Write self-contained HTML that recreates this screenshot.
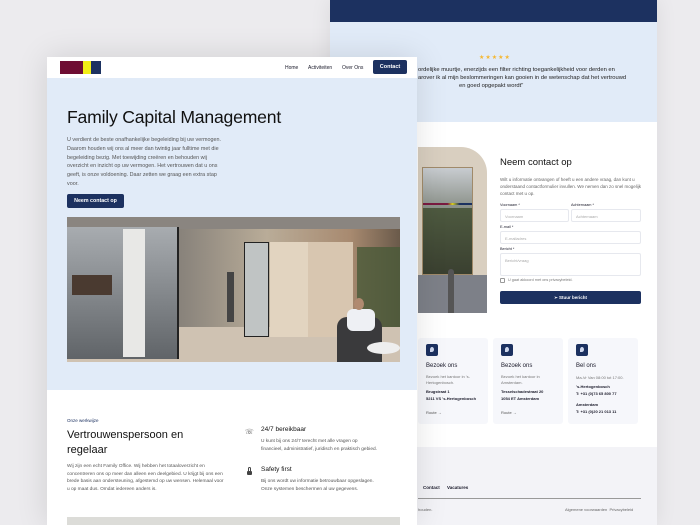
<!DOCTYPE html>
<html><head><meta charset="utf-8"><style>
*{box-sizing:border-box;margin:0;padding:0}
body{width:700px;height:525px;overflow:hidden;background:#ecebee;font-family:"Liberation Sans",sans-serif;position:relative;color:#1a1a2a}
.abs{position:absolute}
.back{left:330px;top:0;width:327px;height:525px;background:#fff;box-shadow:0 0 20px rgba(0,0,0,.08);overflow:hidden}
.front{left:47px;top:57px;width:370px;height:468px;background:#fff;box-shadow:0 0 30px rgba(0,0,0,.12);overflow:hidden}
.t{position:absolute;white-space:nowrap}
.inp{position:absolute;height:13px;border:1px solid #e6e8ee;border-radius:2px;background:#fff;font-size:4px;color:#aaa;padding:4px 4px}
.card{position:absolute;top:338px;width:70px;height:86px;background:#f6f7fb;border-radius:3px}
.ic{position:absolute;left:8px;top:6px;width:12px;height:12px;background:#1c3160;border-radius:2px}
.ic:after{content:"";position:absolute;left:4px;top:3px;width:4px;height:5px;border-radius:50% 50% 50% 0;background:#cfd8ee}
</style></head><body>
<div class="abs back">
  <div class="abs" style="left:0;top:0;width:327px;height:22px;background:#1c3160"></div>
  <div class="abs" style="left:0;top:22px;width:327px;height:100px;background:#e1ebf8"></div>
  <div class="t" style="left:149px;top:54px;font-size:6px;color:#f5b731;letter-spacing:1px">★★★★★</div>
  <div class="t" style="left:88px;top:67px;font-size:5.8px;color:#222">ordelijke muurtje, enerzijds een filter richting toegankelijkheid voor derden en</div>
  <div class="t" style="left:88px;top:75px;font-size:5.8px;color:#222">arover ik al mijn beslommeringen kan gooien in de wetenschap dat het vertrouwd</div>
  <div class="t" style="left:129px;top:83px;font-size:5.8px;color:#222">en goed opgepakt wordt"</div>
  <div class="abs" style="left:88px;top:147px;width:69px;height:166px;border-top-right-radius:26px;background:#d9cfc0;overflow:hidden">
    <div class="abs" style="left:4px;top:20px;width:51px;height:108px;background:#7a7a70;border:1px solid #a08a6a"></div>
    <div class="abs" style="left:5px;top:21px;width:49px;height:40px;background:linear-gradient(#c8ccd0,#8a9088)"></div>
    <div class="abs" style="left:5px;top:61px;width:49px;height:66px;background:linear-gradient(#4e5a40,#3a4030)"></div>
    <div class="abs" style="left:5px;top:56px;width:49px;height:1.5px;background:linear-gradient(90deg,#7a1a40,#7a1a40 50%,#d8d020 60%,#1c3160 75%)"></div>
    <div class="abs" style="left:0;top:128px;width:69px;height:38px;background:#7d8088"></div>
    <div class="abs" style="left:30px;top:122px;width:6px;height:44px;background:#555;border-radius:3px 3px 0 0"></div>
  </div>
  <div class="t" style="left:170px;top:157px;font-size:9.5px;color:#111">Neem contact op</div>
  <div class="t" style="left:170px;top:176px;font-size:4.5px;color:#666;line-height:7px;white-space:normal;width:142px">Wilt u informatie ontvangen of heeft u een andere vraag, dan kunt u onderstaand contactformulier invullen. We nemen dan zo snel mogelijk contact met u op.</div>
  <div class="t" style="left:170px;top:203px;font-size:3.8px">Voornaam *</div>
  <div class="t" style="left:241px;top:203px;font-size:3.8px">Achternaam *</div>
  <div class="inp" style="left:170px;top:209px;width:69px">Voornaam</div>
  <div class="inp" style="left:241px;top:209px;width:70px">Achternaam</div>
  <div class="t" style="left:170px;top:225px;font-size:3.8px">E-mail *</div>
  <div class="inp" style="left:170px;top:231px;width:141px">E-mailadres</div>
  <div class="t" style="left:170px;top:247px;font-size:3.8px">Bericht *</div>
  <div class="inp" style="left:170px;top:253px;width:141px;height:23px">Bericht/vraag</div>
  <div class="abs" style="left:170px;top:278px;width:5px;height:5px;border:1px solid #999;border-radius:1px"></div>
  <div class="t" style="left:178px;top:278px;font-size:3.8px;color:#777">U gaat akkoord met ons privacybeleid.</div>
  <div class="abs" style="left:170px;top:291px;width:141px;height:13px;background:#1c3160;border-radius:2px;color:#fff;font-size:4.5px;font-weight:bold;text-align:center;line-height:13px">➢ Stuur bericht</div>
  <div class="abs" style="left:88px;top:320px;width:239px;height:127px;background:#fff"></div>
  <div class="card" style="left:88px">
    <div class="ic"></div>
    <div class="t" style="left:8px;top:25px;font-size:6px">Bezoek ons</div>
    <div class="t" style="left:8px;top:36px;font-size:4px;color:#777;line-height:6px">Bezoek het kantoor in 's-<br>Hertogenbosch.</div>
    <div class="t" style="left:8px;top:51px;font-size:4px;font-weight:bold;line-height:6.5px">Brugstraat 1<br>5211 VS 's-Hertogenbosch</div>
    <div class="t" style="left:8px;top:72px;font-size:4px;color:#555">Route →</div>
  </div>
  <div class="card" style="left:163px">
    <div class="ic"></div>
    <div class="t" style="left:8px;top:25px;font-size:6px">Bezoek ons</div>
    <div class="t" style="left:8px;top:36px;font-size:4px;color:#777;line-height:6px">Bezoek het kantoor in<br>Amsterdam.</div>
    <div class="t" style="left:8px;top:51px;font-size:4px;font-weight:bold;line-height:6.5px">Tesselschadestraat 20<br>1054 ET Amsterdam</div>
    <div class="t" style="left:8px;top:72px;font-size:4px;color:#555">Route →</div>
  </div>
  <div class="card" style="left:238px">
    <div class="ic"></div>
    <div class="t" style="left:8px;top:25px;font-size:6px">Bel ons</div>
    <div class="t" style="left:8px;top:37px;font-size:4px;color:#777">Ma-Vr Van 08:00 tot 17:00.</div>
    <div class="t" style="left:8px;top:46px;font-size:4px;font-weight:bold;line-height:6.5px">'s-Hertogenbosch<br>T: +31 (0)73 65 800 77</div>
    <div class="t" style="left:8px;top:64px;font-size:4px;font-weight:bold;line-height:6.5px">Amsterdam<br>T: +31 (0)20 21 013 11</div>
  </div>
  <div class="abs" style="left:0;top:447px;width:327px;height:78px;background:#f3f3f7"></div>
  <div class="t" style="left:93px;top:485px;font-size:4.5px;font-weight:bold">Contact</div>
  <div class="t" style="left:117px;top:485px;font-size:4.5px;font-weight:bold">Vacatures</div>
  <div class="abs" style="left:88px;top:498px;width:223px;height:1px;background:#999"></div>
  <div class="t" style="left:88px;top:507px;font-size:4px;color:#666">houden.</div>
  <div class="t" style="left:235px;top:507px;font-size:4px;color:#666">Algemene voorwaarden &nbsp;Privacybeleid</div>
</div>
<div class="abs front">
  <div class="abs" style="left:0;top:0;width:370px;height:21px;background:#fff"></div>
  <div class="abs" style="left:13px;top:4px;width:23px;height:13px;background:#6e0d33"></div>
  <div class="abs" style="left:36px;top:4px;width:8px;height:13px;background:#f2ee17"></div>
  <div class="abs" style="left:44px;top:4px;width:10px;height:13px;background:#1c3160"></div>
  <div class="t" style="left:238px;top:8px;font-size:5px">Home</div>
  <div class="t" style="left:261px;top:8px;font-size:5px">Activiteiten</div>
  <div class="t" style="left:295px;top:8px;font-size:5px">Over Ons</div>
  <div class="abs" style="left:326px;top:3px;width:34px;height:14px;background:#1c3160;border-radius:2px;color:#fff;font-size:5.5px;font-weight:bold;text-align:center;line-height:14px">Contact</div>
  <div class="abs" style="left:0;top:21px;width:370px;height:312px;background:#e1ebf8"></div>
  <div class="t" style="left:20px;top:50px;font-size:17.6px;color:#111;letter-spacing:-.2px">Family Capital Management</div>
  <div class="t" style="left:20px;top:79px;font-size:5.4px;color:#555;line-height:8.8px">U verdient de beste onafhankelijke begeleiding bij uw vermogen.<br>Daarom houden wij ons al meer dan twintig jaar fulltime met die<br>begeleiding bezig. Met toewijding creëren en behouden wij<br>overzicht en inzicht op uw vermogen. Het vertrouwen dat u ons<br>geeft, is onze voldoening. Daar zetten we graag een extra stap<br>voor.</div>
  <div class="abs" style="left:20px;top:137px;width:57px;height:14px;background:#1c3160;border-radius:2px;color:#fff;font-size:5.3px;font-weight:bold;text-align:center;line-height:14px">Neem contact op</div>
  <div class="abs" style="left:20px;top:160px;width:333px;height:145px;background:linear-gradient(90deg,#5a5a5a,#8a847c 35%,#b9ac98 60%,#a88a70 85%,#6a5a4a);overflow:hidden">
    <div class="abs" style="left:0;top:0;width:333px;height:12px;background:#8a8580"></div>
    <div class="abs" style="left:0;top:110px;width:333px;height:35px;background:#cfc2b2"></div>
    <div class="abs" style="left:0;top:10px;width:112px;height:132px;background:linear-gradient(#a8acb0,#606468);border-right:2px solid #222"></div>
    <div class="abs" style="left:56px;top:12px;width:22px;height:128px;background:#e8e8e6"></div>
    <div class="abs" style="left:5px;top:58px;width:40px;height:20px;background:#4a3a30"></div>
    <div class="abs" style="left:160px;top:55px;width:7px;height:50px;background:#444"></div>
    <div class="abs" style="left:177px;top:25px;width:25px;height:95px;background:#c0c4c4;border:1px solid #222"></div>
    <div class="abs" style="left:203px;top:25px;width:38px;height:95px;background:#e2d4c0"></div>
    <div class="abs" style="left:241px;top:25px;width:45px;height:95px;background:#d8c6b0"></div>
    <div class="abs" style="left:290px;top:30px;width:43px;height:80px;background:#4a5a38;opacity:.8"></div>
    <div class="abs" style="left:270px;top:100px;width:45px;height:45px;background:#3a3a3c;border-radius:10px 10px 0 0"></div>
    <div class="abs" style="left:280px;top:92px;width:28px;height:22px;background:#eef0f4;border-radius:6px"></div>
    <div class="abs" style="left:287px;top:81px;width:10px;height:12px;background:#b08a70;border-radius:50%"></div>
    <div class="abs" style="left:300px;top:125px;width:33px;height:12px;background:#eee;border-radius:50%"></div>
  </div>
  <div class="abs" style="left:0;top:333px;width:370px;height:135px;background:#fff"></div>
  <div class="t" style="left:20px;top:361px;font-size:4.5px;color:#1c3160">Onze werkwijze</div>
  <div class="t" style="left:20px;top:371px;font-size:11px;line-height:15px;white-space:normal;width:150px;color:#111">Vertrouwenspersoon en regelaar</div>
  <div class="t" style="left:20px;top:406px;font-size:4.8px;color:#555;line-height:7.6px;white-space:normal;width:160px">Wij zijn een echt Family Office. Wij hebben het totaaloverzicht en concentreren ons op meer dan alleen een deelgebied. U krijgt bij ons een brede basis aan ondersteuning, afgestemd op uw wensen. Helemaal voor u op maat dus. Omdat iedereen anders is.</div>
  <div class="t" style="left:198px;top:371px;font-size:7px;color:#444">☏</div>
  <div class="t" style="left:214px;top:369px;font-size:6.5px;color:#111">24/7 bereikbaar</div>
  <div class="t" style="left:214px;top:381px;font-size:4.8px;color:#555;line-height:7.6px">U kunt bij ons 24/7 terecht met alle vragen op<br>financieel, administratief, juridisch en praktisch gebied.</div>
  <div class="abs" style="left:200px;top:414px;width:5px;height:4px;background:#444;border-radius:1px"></div>
  <div class="abs" style="left:201px;top:410px;width:3px;height:5px;border:1px solid #444;border-bottom:none;border-radius:2px 2px 0 0"></div>
  <div class="t" style="left:214px;top:409px;font-size:6.5px;color:#111">Safety first</div>
  <div class="t" style="left:214px;top:421px;font-size:4.8px;color:#555;line-height:7.6px">Bij ons wordt uw informatie betrouwbaar opgeslagen.<br>Onze systemen beschermen al uw gegevens.</div>
  <div class="abs" style="left:20px;top:460px;width:333px;height:10px;background:#dcdcd8"></div>
</div>
</body></html>
